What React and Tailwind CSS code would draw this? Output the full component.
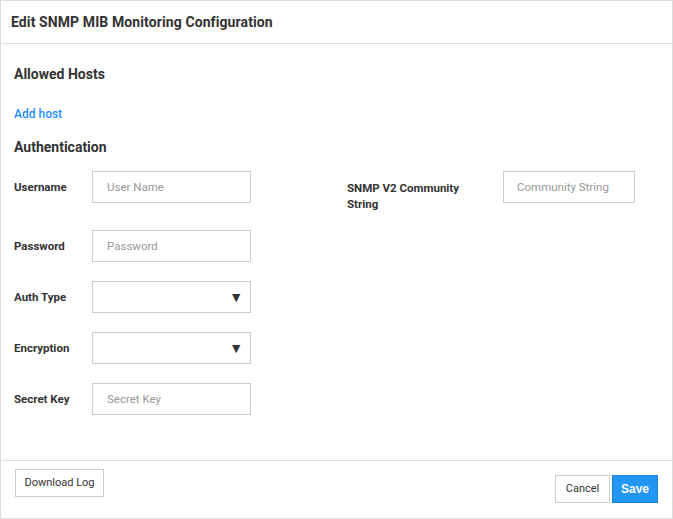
import React from 'react';

const Field = ({ label, placeholder, select }) => (
    <div className="flex items-center h-[32px]">
        <label className="w-[78px] pt-[2px] text-[11.5px] font-bold text-[#333]">{label}</label>
        {select ? (
            <div className="w-[159px] h-[32px] border border-[#ccc] flex items-center justify-end pr-[7px] text-[14px] text-[#333]">
                ▼
            </div>
        ) : (
            <input
                placeholder={placeholder}
                className="w-[159px] h-[32px] border border-[#ccc] px-[14px] text-[11.5px] placeholder:text-[#999] outline-none"
            />
        )}
    </div>
);

const App = () => {
    return (
        <div className="w-[673px] h-[519px] bg-white border border-[#ddd] flex flex-col font-['Roboto',sans-serif] text-[#333]">
            <div className="h-[43px] border-b border-[#ddd] flex items-center px-[10px]">
                <h1 className="text-[14px] font-bold tracking-[0.1px]">Edit SNMP MIB Monitoring Configuration</h1>
            </div>

            <div className="flex-1 px-[13px]">
                <h2 className="text-[14px] font-bold mt-[21px] leading-[18px]">Allowed Hosts</h2>
                <a className="block text-[12px] font-medium text-[#1e90ff] mt-[24px] leading-[14px]">Add host</a>
                <h2 className="text-[14px] font-bold mt-[17px] leading-[18px]">Authentication</h2>

                <div className="flex mt-[15px]">
                    <div className="flex flex-col w-[333px]">
                        <Field label="Username" placeholder="User Name" />
                        <div className="mt-[27px] flex flex-col gap-[19px]">
                            <Field label="Password" placeholder="Password" />
                            <Field label="Auth Type" select />
                            <Field label="Encryption" select />
                            <Field label="Secret Key" placeholder="Secret Key" />
                        </div>
                    </div>
                    <div className="flex items-start">
                        <label className="w-[156px] pt-[9px] text-[11.5px] font-bold leading-[16px]">
                            SNMP V2 Community<br />String
                        </label>
                        <input
                            placeholder="Community String"
                            className="w-[132px] h-[32px] border border-[#ccc] px-[13px] text-[11.5px] placeholder:text-[#999] outline-none"
                        />
                    </div>
                </div>
            </div>

            <div className="h-[58px] border-t border-[#ddd] flex justify-between px-[14px]">
                <button className="mt-[8px] h-[28px] w-[89px] border border-[#ccc] bg-white text-[11px] font-normal">
                    Download Log
                </button>
                <div className="flex gap-[2px] mt-[14px]">
                    <button className="h-[28px] w-[55px] border border-[#ccc] bg-white text-[11px] font-normal">
                        Cancel
                    </button>
                    <button className="h-[28px] w-[46px] border border-[#1a7fd4] bg-[#2196f3] text-white text-[12px] font-bold font-['Liberation_Sans',sans-serif]">
                        Save
                    </button>
                </div>
            </div>
        </div>
    );
};

export default App;
